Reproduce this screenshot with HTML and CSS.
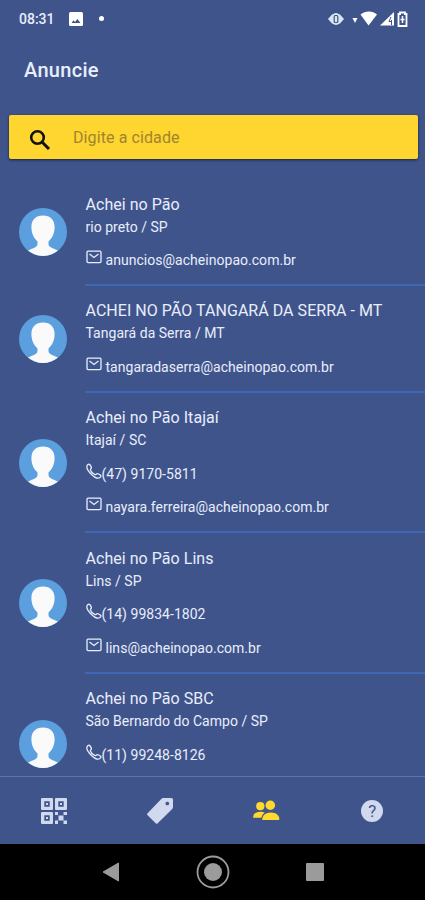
FILE: index.html
```html
<!DOCTYPE html>
<html lang="pt-BR">
<head>
    <meta charset="UTF-8">
    <meta name="viewport" content="width=device-width, initial-scale=1.0">
    <title>Anuncie</title>
    <link rel="stylesheet" href="styles.css">
</head>
<body>

    <svg class="sprite" width="0" height="0">
        <symbol id="avatar" viewBox="0 0 48 48">
            <circle cx="24" cy="24" r="24" fill="#5c9fdf"/>
            <path fill="#fafafa" d="M24 7.500c-7.500 0-11.600 4.500-11.600 11.500 0 6 2.200 11 6.100 14.500v2.500c0 3-4 4-9.500 6.500C13.200 46 18.400 48 24 48s10.800-2 15-5.500c-5.500-2.500-9.500-3.500-9.500-6.500v-2.500c3.900-3.500 6.100-8.500 6.100-14.500 0-7-4.100-11.500-11.600-11.500z"/>
        </symbol>
        <symbol id="mail" viewBox="0 0 16 14">
            <rect x="1" y="1.200" width="14" height="11.400" rx="1" fill="none" stroke="currentColor" stroke-width="1.300"/>
            <path d="M3.500 4L8 7.500 12.500 4" fill="none" stroke="currentColor" stroke-width="1.300"/>
        </symbol>
        <symbol id="phone" viewBox="0 0 16 16">
            <path d="M1.200 2.500C1.800 1.400 3 .8 3.700 1.500c.8.900 1.500 2 1.700 3 .2 1.100-1.300 1.500-1 2.500.6 1.700 2.900 4 4.600 4.600 1 .3 1.400-1.200 2.500-1 1 .2 2.200.9 3.100 1.700.7.700.1 1.900-1 2.500-2 1.100-5.300-.6-8.300-3.600S.1 4.500 1.200 2.500z" fill="none" stroke="currentColor" stroke-width="1.300"/>
        </symbol>
    </svg>

    <div class="status-bar">
        <span class="time">08:31</span>
        <svg class="picture" width="14" height="14" viewBox="0 0 14 14">
            <rect width="14" height="14" rx="1.500" fill="#fff"/>
            <path d="M2.500 11l2-2.800 1.600 1.800 2.200-3 3.200 4z" fill="#40548c"/>
        </svg>
        <span class="dot"></span>
        <div class="status-icons">
            <svg width="82" height="18" viewBox="0 0 82 18">
                <path d="M1 9l4-4.500h8L17 9l-4 4.500H5z" fill="#dbe5f4"/>
                <ellipse cx="9" cy="9" rx="5" ry="6" fill="#dbe5f4"/>
                <rect x="7.200" y="5.500" width="3.600" height="7" rx="1" fill="none" stroke="#40548c" stroke-width="1.200"/>
                <path d="M25.500 8h5L28 13z" fill="#fff"/>
                <path d="M33.500 4.500c5-4 12-4 16.500 0l-8.500 11z" fill="#fff"/>
                <path d="M47 9v6M50 8l-3 5" stroke="#40548c"/>
                <path d="M53 15.500L67 2v13.500z" fill="#fff"/>
                <path d="M64 7l-2 4.500h3M64.500 10v5" stroke="#40548c" fill="none"/>
                <path d="M73 2.500h5V4h1.500v12h-8V4H73z" fill="none" stroke="#fff" stroke-width="1.800"/>
                <path d="M75.500 6v7M73.500 9.500h4" fill="none" stroke="#fff" stroke-width="1.500"/>
            </svg>
        </div>
    </div>

    <h1 class="header">Anuncie</h1>

    <label class="search">
        <svg width="22" height="22" viewBox="0 0 22 22">
            <circle cx="8.500" cy="8.500" r="6.300" fill="none" stroke="#111" stroke-width="2.600"/>
            <path d="M13 13l7 7" stroke="#111" stroke-width="3"/>
        </svg>
        <input type="text" placeholder="Digite a cidade">
    </label>

    <div class="list">
        <div class="item">
            <svg class="avatar"><use href="#avatar"/></svg>
            <div class="info">
                <h2>Achei no Pão</h2>
                <p class="city">rio preto / SP</p>
                <p class="contact mail"><svg><use href="#mail"/></svg><span>anuncios@acheinopao.com.br</span></p>
            </div>
        </div>
        <div class="item">
            <svg class="avatar"><use href="#avatar"/></svg>
            <div class="info">
                <h2>ACHEI NO PÃO TANGARÁ DA SERRA - MT</h2>
                <p class="city">Tangará da Serra / MT</p>
                <p class="contact mail"><svg><use href="#mail"/></svg><span>tangaradaserra@acheinopao.com.br</span></p>
            </div>
        </div>
        <div class="item">
            <svg class="avatar"><use href="#avatar"/></svg>
            <div class="info">
                <h2>Achei no Pão Itajaí</h2>
                <p class="city">Itajaí / SC</p>
                <p class="contact phone"><svg><use href="#phone"/></svg><span>(47) 9170-5811</span></p>
                <p class="contact mail"><svg><use href="#mail"/></svg><span>nayara.ferreira@acheinopao.com.br</span></p>
            </div>
        </div>
        <div class="item">
            <svg class="avatar"><use href="#avatar"/></svg>
            <div class="info">
                <h2>Achei no Pão Lins</h2>
                <p class="city">Lins / SP</p>
                <p class="contact phone"><svg><use href="#phone"/></svg><span>(14) 99834-1802</span></p>
                <p class="contact mail"><svg><use href="#mail"/></svg><span>lins@acheinopao.com.br</span></p>
            </div>
        </div>
        <div class="item last">
            <svg class="avatar"><use href="#avatar"/></svg>
            <div class="info">
                <h2>Achei no Pão SBC</h2>
                <p class="city">São Bernardo do Campo / SP</p>
                <p class="contact phone"><svg><use href="#phone"/></svg><span>(11) 99248-8126</span></p>
            </div>
        </div>
    </div>

    <div class="tabs">
        <a class="tab">
            <svg width="26" height="26" viewBox="0 0 26 26" fill="currentColor">
                <path fill-rule="evenodd" d="M1 0h10q1 0 1 1v10q0 1-1 1H1q-1 0-1-1V1q0-1 1-1zM3.300 3.300v5.400h5.400V3.300zM15 0h10q1 0 1 1v10q0 1-1 1H15q-1 0-1-1V1q0-1 1-1zM17.300 3.300v5.400h5.400V3.300zM1 14h10q1 0 1 1v10q0 1-1 1H1q-1 0-1-1V15q0-1 1-1zM3.300 17.300v5.400h5.400v-5.400z"/>
                <path d="M5 5h2v2H5zM19 5h2v2h-2zM5 19h2v2H5zM14 14h3v3h-3zM22.500 14H26v3h-3.500zM17.500 17.500h5v5h-5zM14 22.500h3V26h-3zM22.500 22.500H26V26h-3.500z"/>
            </svg>
        </a>
        <a class="tab">
            <svg width="26" height="26" viewBox="0 0 26 26" fill="currentColor">
                <path fill-rule="evenodd" d="M16 0h8.500Q26 0 26 1.500V9q0 1.200-.8 2L10.700 25.300q-1 1-2 0L.6 17.200q-1-1 0-2L14.500.7Q15.200 0 16 0zM20.300 3.700a1.800 1.800 0 1 0 .01 0z"/>
            </svg>
        </a>
        <a class="tab active">
            <svg width="27" height="21" viewBox="0 0 28 22" fill="currentColor">
                <circle cx="7.500" cy="6.500" r="4.300"/>
                <path d="M0 18.500c0-4.200 3-6.300 7.500-6.300 2 0 3.500.4 4.600 1.100-2 1.300-3 3-3.300 5.200z"/>
                <circle cx="18" cy="5.500" r="5"/>
                <path d="M9.500 21c0-5 3.500-8 9-8s9 3 9 7q0 1-1 1z"/>
            </svg>
        </a>
        <a class="tab">
            <span class="help">?</span>
        </a>
    </div>

    <div class="nav-bar">
        <svg width="18" height="20" viewBox="0 0 18 20"><path d="M16.500 1v18L1 10z" fill="#9b9b9b" stroke="#9b9b9b" stroke-linejoin="round"/></svg>
        <svg width="34" height="34" viewBox="0 0 34 34"><circle cx="17" cy="17" r="15.500" fill="none" stroke="#9b9b9b" stroke-width="1.800"/><circle cx="17" cy="17" r="9" fill="#9b9b9b"/></svg>
        <svg width="18" height="18" viewBox="0 0 18 18"><rect width="18" height="18" rx="1" fill="#9b9b9b"/></svg>
    </div>

</body>
</html>
```
FILE: styles.css
```css
* {
    box-sizing: border-box;
}

body {
    font-family: Roboto, "Liberation Sans", sans-serif;
    background: #40548c;
    color: #e8eefb;
    margin: 0;
    height: 900px;
    display: flex;
    flex-direction: column;
    overflow: hidden;
}

svg {
    display: block;
    flex: none;
}

.sprite {
    height: 0;
}

.status-bar {
    height: 37px;
    display: flex;
    align-items: center;
    padding: 0 16px 0 19px;
    flex: none;
}

.time {
    font-size: 14px;
    font-weight: 500;
    width: 50px;
}

.dot {
    width: 5px;
    height: 5px;
    margin-left: 16px;
    border-radius: 50%;
    background: #fff;
}

.status-icons {
    margin-left: auto;
}

.header {
    margin: 0;
    height: 78px;
    padding: 20px 24px;
    font-size: 20px;
    font-weight: 500;
    line-height: 26px;
    letter-spacing: 0.3px;
    flex: none;
}

.search {
    height: 44px;
    margin: 0 7px 0 9px;
    padding: 0 20px;
    display: flex;
    align-items: center;
    gap: 22px;
    background: #ffd530;
    border-radius: 2px;
    box-shadow: 0 1px 3px rgba(0, 0, 0, 0.6);
    flex: none;
}

.search svg {
    margin-top: 6px;
}

.search input {
    flex: 1;
    border: none;
    outline: none;
    padding: 0;
    background: none;
    font-family: inherit;
    font-size: 16px;
    letter-spacing: 0.1px;
}

.search input::placeholder {
    color: #9f8430;
}

.list {
    flex: 1;
    min-height: 0;
    padding-top: 20px;
    overflow: hidden;
}

.item {
    display: flex;
    align-items: center;
    padding-left: 19px;
}

.avatar {
    width: 48px;
    height: 48px;
    margin-right: 18px;
}

.info {
    flex: 1;
    padding: 14.500px 0 12.500px 0.500px;
    border-bottom: 2px solid #3e67b4;
}

.last .info {
    height: 141px;
}

h2, p {
    margin: 0;
    white-space: nowrap;
}

h2 {
    font-size: 16px;
    font-weight: 400;
    line-height: 22px;
    letter-spacing: 0.04px;
}

.city {
    font-size: 14px;
    line-height: 22px;
    letter-spacing: 0.03px;
}

.contact {
    height: 33.800px;
    padding-top: 11.500px;
    display: flex;
    font-size: 14px;
    line-height: 22px;
    letter-spacing: 0.03px;
}

.contact svg {
    width: 16px;
    height: 16px;
}

.mail svg {
    height: 14px;
    margin-top: 1px;
    margin-right: 4px;
}

.tabs {
    height: 68px;
    display: flex;
    border-top: 1px solid #5a73b5;
    color: #d0d9ee;
    flex: none;
}

.tab {
    flex: 1;
    display: flex;
    align-items: center;
    justify-content: center;
    padding-left: 1px;
}

.tab.active {
    color: #ffd92e;
}

.help {
    width: 22px;
    height: 22px;
    border-radius: 50%;
    background: #d0d9ee;
    color: #40548c;
    font-size: 17px;
    line-height: 22px;
    text-align: center;
}

.nav-bar {
    height: 56px;
    display: flex;
    align-items: center;
    justify-content: center;
    gap: 76px;
    background: #000;
    flex: none;
}
```
